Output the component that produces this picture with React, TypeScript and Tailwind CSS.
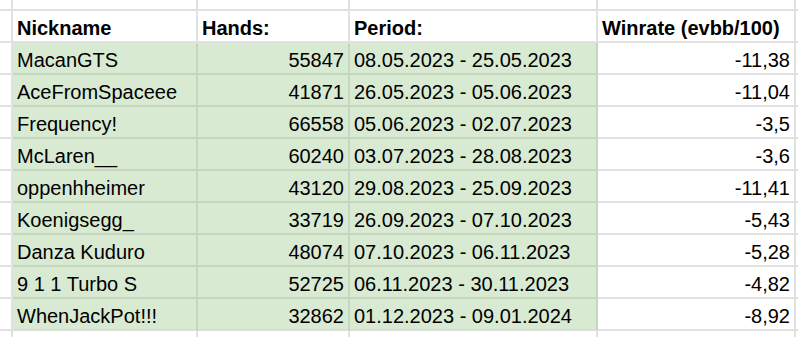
import React from "react";

const rows: [string, string, string, string][] = [
  ["MacanGTS", "55847", "08.05.2023 - 25.05.2023", "-11,38"],
  ["AceFromSpaceee", "41871", "26.05.2023 - 05.06.2023", "-11,04"],
  ["Frequency!", "66558", "05.06.2023 - 02.07.2023", "-3,5"],
  ["McLaren__", "60240", "03.07.2023 - 28.08.2023", "-3,6"],
  ["oppenhheimer", "43120", "29.08.2023 - 25.09.2023", "-11,41"],
  ["Koenigsegg_", "33719", "26.09.2023 - 07.10.2023", "-5,43"],
  ["Danza Kuduro", "48074", "07.10.2023 - 06.11.2023", "-5,28"],
  ["9 1 1 Turbo S", "52725", "06.11.2023 - 30.11.2023", "-4,82"],
  ["WhenJackPot!!!", "32862", "01.12.2023 - 09.01.2024", "-8,92"],
];

const gray = "border-r-2 border-b-2 border-[#e1e1e1] bg-white";
const txt = "flex items-end pb-[3px] leading-[20px] text-[20px] text-black whitespace-nowrap overflow-hidden";

export default function App() {
  return (
    <div
      className="w-[798px] h-[337px] overflow-hidden bg-white grid grid-cols-[13px_185px_152px_248px_198px_2px] grid-rows-[11px_repeat(10,32px)_6px]"
      style={{ fontFamily: '"Liberation Sans", Arial, sans-serif' }}
    >
      {/* top partial row */}
      <div className={gray} />
      <div className={gray} />
      <div className={gray} />
      <div className={gray} />
      <div className={gray} />
      <div className="border-b-2 border-[#e1e1e1]" />

      {/* header */}
      <div className={gray} />
      <div className={`${gray} ${txt} pl-[4px] font-bold`}>Nickname</div>
      <div className={`${gray} ${txt} pl-[4px] font-bold`}>Hands:</div>
      <div className={`${gray} ${txt} pl-[4px] font-bold`}>Period:</div>
      <div className={`${gray} ${txt} pl-[4px] font-bold`}>Winrate (evbb/100)</div>
      <div className="border-b-2 border-[#e1e1e1]" />

      {rows.map((r, i) => {
        const last = i === rows.length - 1;
        const greenB = last
          ? "border-r-2 border-b-2 border-r-[#c4d6be] border-b-[#dcdcdc] bg-[#d9ead3]"
          : "border-r-2 border-b-2 border-[#c4d6be] bg-[#d9ead3]";
        return (
          <React.Fragment key={i}>
            <div className={gray} />
            <div className={`${greenB} ${txt} pl-[4px]`}>{r[0]}</div>
            <div className={`${greenB} ${txt} justify-end pr-[4px]`}>{r[1]}</div>
            <div className={`${greenB} ${txt} pl-[4px]`}>{r[2]}</div>
            <div className={`${gray} ${txt} justify-end pr-[4px]`}>{r[3]}</div>
            <div className="border-b-2 border-[#e1e1e1]" />
          </React.Fragment>
        );
      })}

      {/* bottom partial row */}
      <div className="border-r-2 border-[#e1e1e1]" />
      <div className="border-r-2 border-[#e1e1e1]" />
      <div className="border-r-2 border-[#e1e1e1]" />
      <div className="border-r-2 border-[#e1e1e1]" />
      <div className="border-r-2 border-[#e1e1e1]" />
      <div />
    </div>
  );
}
